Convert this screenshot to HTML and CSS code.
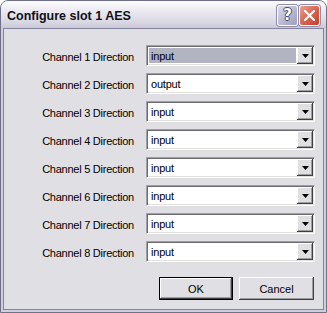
FILE: index.html
```html
<!DOCTYPE html>
<html lang="en">
<head>
  <meta charset="UTF-8" />
  <title>Configure slot 1 AES</title>
  <link rel="stylesheet" href="styles.css">
</head>
<body>
  <div class="window">
    <div class="titlebar">
      <span class="title">Configure slot 1 AES</span>
      <div class="caption-buttons">
        <div class="cap-btn help">?</div>
        <div class="cap-btn close">
          <svg width="11" height="11" viewBox="0 0 11 11">
            <path d="M1 1 L10 10 M10 1 L1 10" stroke="#fff" stroke-width="2.2" stroke-linecap="round" />
          </svg>
        </div>
      </div>
    </div>

    <div class="client">
      <div class="form">
        <label>Channel 1 Direction</label>
        <div class="combo focused"><span class="value">input</span><span class="drop"></span></div>
        <label>Channel 2 Direction</label>
        <div class="combo"><span class="value">output</span><span class="drop"></span></div>
        <label>Channel 3 Direction</label>
        <div class="combo"><span class="value">input</span><span class="drop"></span></div>
        <label>Channel 4 Direction</label>
        <div class="combo"><span class="value">input</span><span class="drop"></span></div>
        <label>Channel 5 Direction</label>
        <div class="combo"><span class="value">input</span><span class="drop"></span></div>
        <label>Channel 6 Direction</label>
        <div class="combo"><span class="value">input</span><span class="drop"></span></div>
        <label>Channel 7 Direction</label>
        <div class="combo"><span class="value">input</span><span class="drop"></span></div>
        <label>Channel 8 Direction</label>
        <div class="combo"><span class="value">input</span><span class="drop"></span></div>
      </div>

      <div class="actions">
        <button class="btn default">OK</button>
        <button class="btn cancel">Cancel</button>
      </div>
    </div>
  </div>
</body>
</html>
```

FILE: styles.css
```css
* {
  box-sizing: border-box;
}
body {
  margin: 0;
  font-family: 'Liberation Sans', Arial, sans-serif;
  font-size: 11px;
  background: #ffffff;
}
.window {
  width: 327px;
  height: 313px;
  display: flex;
  flex-direction: column;
  border: 1px solid #6f6e8b;
  border-radius: 8px 8px 0 0;
  background: #cfcedb;
  overflow: hidden;
}
.titlebar {
  height: 27px;
  flex: none;
  display: flex;
  align-items: center;
  justify-content: space-between;
  padding: 1px 6px 0 6px;
  background: linear-gradient(#fdfdfe 0%, #eceaf1 35%, #dddce6 70%, #cac9d7 100%);
}
.title {
  font-weight: bold;
  font-size: 12.5px;
  color: #101018;
  padding-top: 1px;
}
.caption-buttons {
  display: flex;
  gap: 1px;
}
.cap-btn {
  width: 21px;
  height: 21px;
  border: 1px solid #fdfdff;
  border-radius: 3px;
  box-shadow: 0 0 0 1px #8f8eaa;
  display: flex;
  align-items: center;
  justify-content: center;
}
.help {
  background: linear-gradient(135deg, #dcdcec 0%, #bcbbd4 50%, #9d9cbb 100%);
  color: #fff;
  font: bold 15px 'DejaVu Sans', sans-serif;
  text-shadow: 1px 0 #4a4a66, -1px 0 #4a4a66, 0 1px #4a4a66, 0 -1px #4a4a66;
}
.close {
  background: linear-gradient(135deg, #f0a090 0%, #dc6a55 45%, #bf3f2c 100%);
}
.client {
  flex: 1;
  margin: 0 2px 2px 2px;
  border: 1px solid #85849e;
  background: #e0dfe3;
  padding: 16px 8px 0 0;
}
.form {
  display: grid;
  grid-template-columns: 1fr 169px;
  column-gap: 12px;
  row-gap: 7px;
}
.form label {
  text-align: right;
  align-self: center;
  letter-spacing: -0.25px;
  color: #000;
  padding-top: 2px;
}
.combo {
  height: 21px;
  display: flex;
  align-items: stretch;
  background: #fff;
  border: 1px solid;
  border-color: #a0a0a4 #ffffff #ffffff #a0a0a4;
  box-shadow: inset 1px 1px #6b6b70, inset -1px -1px #e3e2dc;
  padding: 2px;
}
.combo.focused .value {
  background: #b3b4c1;
}
.value {
  flex: 1;
  padding: 1px 0 0 2px;
  line-height: 14px;
  color: #000;
  letter-spacing: -0.2px;
  margin-right: 1px;
}
.drop {
  width: 16px;
  background: #e0dfe3 url("data:image/svg+xml;utf8,<svg xmlns='http://www.w3.org/2000/svg' width='7' height='4'><polygon points='0,0 7,0 3.5,4' fill='black'/></svg>") no-repeat center;
  box-shadow: inset -1px -1px #404040, inset 1px 1px #fff, inset -2px -2px #9d9da1;
  margin: -1px -1px -1px 0;
}
.actions {
  display: flex;
  justify-content: flex-end;
  gap: 6px;
  margin-top: 15px;
  padding-right: 1px;
}
.btn {
  height: 23px;
  font: 11px 'Liberation Sans', Arial, sans-serif;
  color: #000;
  background: #e0dfe3;
  border: none;
  padding: 0;
  box-shadow: inset -1px -1px #404040, inset 1px 1px #fff, inset -2px -2px #9d9da1;
}
.btn.default {
  width: 74px;
  border: 1px solid #000;
}
.btn.cancel {
  width: 75px;
}
```
